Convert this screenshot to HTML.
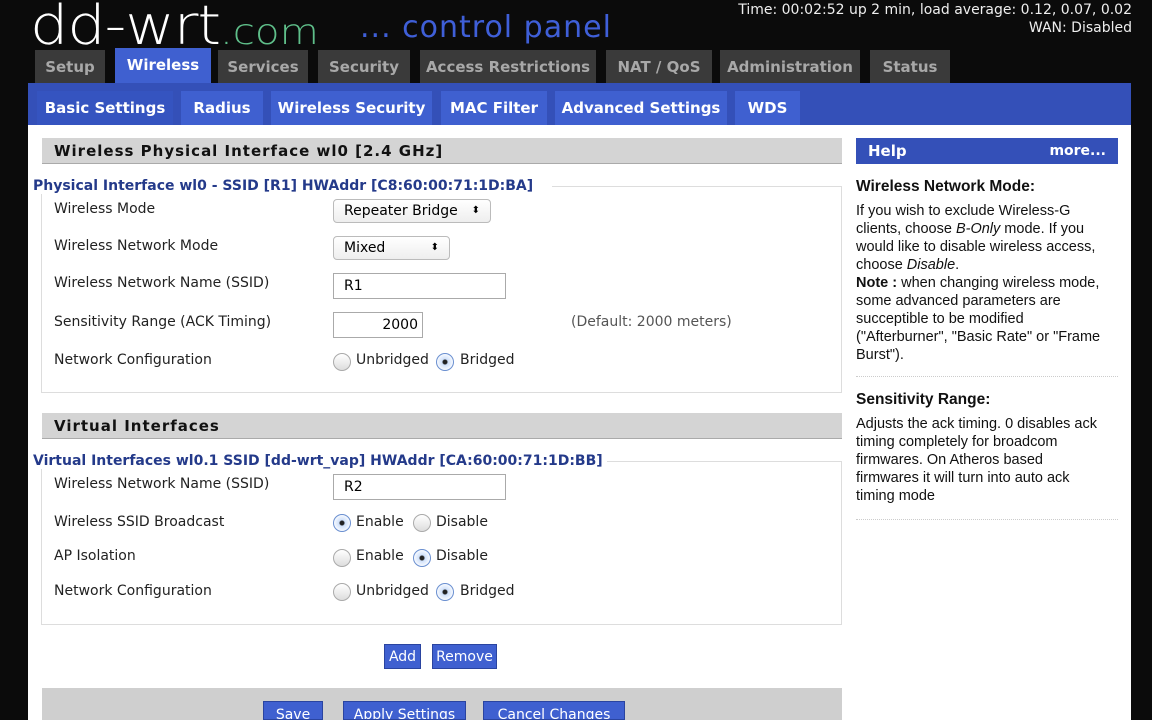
<!DOCTYPE html>
<html style="overflow:hidden;width:1152px;height:720px"><head><meta charset="utf-8"><style>
*{margin:0;padding:0;box-sizing:border-box}
body{width:1152px;height:720px;background:#0b0b0b;position:relative;overflow:hidden;font-family:"DejaVu Sans","Liberation Sans",sans-serif;}
.a{position:absolute;white-space:nowrap}
.logo{font-family:"DejaVu Sans",sans-serif;color:#fff;font-size:54px;left:30px;top:-6px;letter-spacing:-1px;font-weight:300;transform-origin:0 0;transform:scaleX(1.12)}
.tab{position:absolute;top:50px;height:34px;background:#3a3a3a;color:#a8a8a8;font-weight:bold;font-size:15px;line-height:34px;text-align:center}
.st{position:absolute;top:91px;height:34px;background:#3f60d0;color:#fff;font-weight:bold;font-size:15px;line-height:34px;text-align:center}
.sec{position:absolute;left:42px;width:800px;height:26px;background:#d4d4d4;border-bottom:1px solid #aaa;font-weight:bold;font-size:15px;line-height:26px;padding-left:12px;letter-spacing:1px;color:#111}
.box{position:absolute;left:41px;width:801px;border:1px solid #ddd;border-top:none}
.leg{color:#243a8a;font-weight:bold;font-size:14px;background:#fff}
.lbl{font-size:14px;color:#222}
.in{position:absolute;border:1px solid #aaa;background:#fff;height:26px;font-size:14px;line-height:24px;padding:0 10px}
.sel{position:absolute;border:1px solid #bbb;border-radius:4px;background:linear-gradient(#fff,#eee);height:24px;font-size:14px;line-height:22px;padding:0 10px}
.r{position:absolute;width:18px;height:18px;border-radius:50%;border:1px solid #aaa;background:linear-gradient(#fff,#ddd)}
.r.on{border-color:#6a8fd0;background:radial-gradient(circle,#222 0 2px,#cfe0fa 3px,#fff 9px)}
.btn{position:absolute;background:#3f60d0;color:#fff;font-size:14px;text-align:center;line-height:24px;height:25px;border:1px solid #2a44a0}
.help p{font-family:"Liberation Sans",sans-serif;font-size:14.5px;line-height:18px;color:#111}
</style></head><body>
<div class="a logo">dd-wrt<span style="color:#5fbf8a;font-size:36px;letter-spacing:0">.com</span></div>
<div class="a" style="left:360px;top:10px;color:#3f5fd8;font-size:30px;letter-spacing:1px">... control panel</div>
<div class="a" style="right:20px;top:1px;color:#eee;font-size:14px;text-align:right;line-height:18px">Time: 00:02:52 up 2 min, load average: 0.12, 0.07, 0.02<br>WAN: Disabled</div>
<div class="tab" style="left:35px;width:70px">Setup</div>
<div class="tab" style="left:115px;width:96px;top:48px;height:37px;background:#3f60d0;color:#fff;line-height:34px">Wireless</div>
<div class="tab" style="left:218px;width:90px">Services</div>
<div class="tab" style="left:318px;width:92px">Security</div>
<div class="tab" style="left:420px;width:176px">Access Restrictions</div>
<div class="tab" style="left:606px;width:106px">NAT / QoS</div>
<div class="tab" style="left:720px;width:140px">Administration</div>
<div class="tab" style="left:870px;width:80px">Status</div>
<div class="a" style="left:28px;top:83px;width:1103px;height:42px;background:#3450b8"></div>
<div class="st" style="left:37px;width:136px;background:#3554c0;color:#fff">Basic Settings</div>
<div class="st" style="left:181px;width:82px">Radius</div>
<div class="st" style="left:271px;width:161px">Wireless Security</div>
<div class="st" style="left:441px;width:106px">MAC Filter</div>
<div class="st" style="left:555px;width:172px">Advanced Settings</div>
<div class="st" style="left:735px;width:65px">WDS</div>
<div class="a" style="left:28px;top:125px;width:1103px;height:595px;background:#fff"></div>

<div class="sec" style="top:138px">Wireless Physical Interface wl0 [2.4 GHz]</div>
<div class="box" style="top:186px;height:207px"></div>
<div class="a" style="left:552px;top:186px;width:290px;border-top:1px solid #ddd"></div>
<div class="a leg" style="left:33px;top:178px;padding-right:4px">Physical Interface wl0 - SSID [R1] HWAddr [C8:60:00:71:1D:BA]</div>
<div class="a lbl" style="left:54px;top:201px">Wireless Mode</div>
<div class="sel" style="left:333px;top:199px;width:158px">Repeater Bridge <span style="float:right;font-size:10px">⬍</span></div>
<div class="a lbl" style="left:54px;top:238px">Wireless Network Mode</div>
<div class="sel" style="left:333px;top:236px;width:117px">Mixed <span style="float:right;font-size:10px">⬍</span></div>
<div class="a lbl" style="left:54px;top:275px">Wireless Network Name (SSID)</div>
<div class="in" style="left:333px;top:273px;width:173px">R1</div>
<div class="a lbl" style="left:54px;top:314px">Sensitivity Range (ACK Timing)</div>
<div class="in" style="left:333px;top:312px;width:90px;text-align:right;padding-right:4px">2000</div>
<div class="a lbl" style="left:571px;top:314px;color:#555">(Default: 2000 meters)</div>
<div class="a lbl" style="left:54px;top:352px">Network Configuration</div>
<div class="r" style="left:333px;top:353px"></div><div class="a lbl" style="left:356px;top:352px">Unbridged</div>
<div class="r on" style="left:436px;top:353px"></div><div class="a lbl" style="left:460px;top:352px">Bridged</div>

<div class="sec" style="top:413px">Virtual Interfaces</div>
<div class="box" style="top:461px;height:164px"></div>
<div class="a" style="left:600px;top:461px;width:242px;border-top:1px solid #ddd"></div>
<div class="a leg" style="left:33px;top:453px;padding-right:4px">Virtual Interfaces wl0.1 SSID [dd-wrt_vap] HWAddr [CA:60:00:71:1D:BB]</div>
<div class="a lbl" style="left:54px;top:476px">Wireless Network Name (SSID)</div>
<div class="in" style="left:333px;top:474px;width:173px">R2</div>
<div class="a lbl" style="left:54px;top:514px">Wireless SSID Broadcast</div>
<div class="r on" style="left:333px;top:514px"></div><div class="a lbl" style="left:356px;top:514px">Enable</div>
<div class="r" style="left:413px;top:514px"></div><div class="a lbl" style="left:436px;top:514px">Disable</div>
<div class="a lbl" style="left:54px;top:548px">AP Isolation</div>
<div class="r" style="left:333px;top:549px"></div><div class="a lbl" style="left:356px;top:548px">Enable</div>
<div class="r on" style="left:413px;top:549px"></div><div class="a lbl" style="left:436px;top:548px">Disable</div>
<div class="a lbl" style="left:54px;top:583px">Network Configuration</div>
<div class="r" style="left:333px;top:583px"></div><div class="a lbl" style="left:356px;top:583px">Unbridged</div>
<div class="r on" style="left:436px;top:583px"></div><div class="a lbl" style="left:460px;top:583px">Bridged</div>

<div class="btn" style="left:384px;top:644px;width:37px">Add</div>
<div class="btn" style="left:432px;top:644px;width:65px">Remove</div>
<div class="a" style="left:42px;top:688px;width:800px;height:32px;background:#cfcfcf"></div>
<div class="btn" style="left:263px;top:701px;width:60px;height:19px;overflow:hidden;line-height:26px">Save</div>
<div class="btn" style="left:343px;top:701px;width:123px;height:19px;overflow:hidden;line-height:26px">Apply Settings</div>
<div class="btn" style="left:483px;top:701px;width:142px;height:19px;overflow:hidden;line-height:26px">Cancel Changes</div>

<div class="a" style="left:856px;top:138px;width:262px;height:26px;background:#3450b8;color:#fff;font-weight:bold;font-size:15px;line-height:26px;padding:0 12px">Help<span style="float:right;font-size:14px">more...</span></div>
<div class="a help" style="left:856px;top:178px;width:262px;white-space:nowrap">
<p style="font-weight:bold;font-size:15.5px;margin-bottom:6px">Wireless Network Mode:</p>
<p>If you wish to exclude Wireless-G<br>clients, choose <i>B-Only</i> mode. If you<br>would like to disable wireless access,<br>choose <i>Disable</i>.<br><b>Note :</b> when changing wireless mode,<br>some advanced parameters are<br>succeptible to be modified<br>("Afterburner", "Basic Rate" or "Frame<br>Burst").</p>
<div style="border-top:1px dotted #ccc;margin:12px 0 14px"></div>
<p style="font-weight:bold;font-size:15.5px;margin-bottom:6px">Sensitivity Range:</p>
<p>Adjusts the ack timing. 0 disables ack<br>timing completely for broadcom<br>firmwares. On Atheros based<br>firmwares it will turn into auto ack<br>timing mode</p>
<div style="border-top:1px dotted #ccc;margin-top:14px"></div>
</div>
</body></html>
